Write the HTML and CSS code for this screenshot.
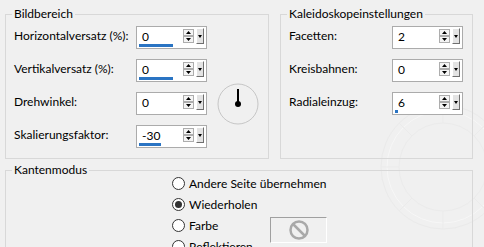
FILE: index.html
```html
<!DOCTYPE html>
<html lang="de">
<head>
  <meta charset="UTF-8" />
  <title>Kaleidoskop</title>
  <link rel="stylesheet" href="styles.css">
</head>
<body>
  <div class="dialog">
    <svg class="watermark" width="150" height="150" viewBox="0 0 150 150">
      <circle cx="75" cy="75" r="62" fill="none" stroke="#eaeaea" />
      <circle cx="75" cy="75" r="56" fill="none" stroke="#f7f7f7" />
      <circle cx="75" cy="75" r="44" fill="none" stroke="#ebebeb" />
      <path d="M75 13 L75 31 M75 119 L75 137 M13 75 L31 75 M119 75 L137 75 M31 31 L44 44 M106 44 L119 31 M31 119 L44 106 M106 106 L119 119" stroke="#ebebeb" fill="none" />
    </svg>

    <div class="top-row">
      <fieldset class="group image-area">
        <legend>Bildbereich</legend>
        <div class="form-grid">
          <label>Horizontalversatz (%):</label>
          <div class="spin">
            <div class="spin-field"><span class="spin-value">0</span><span class="spin-bar" style="width:34px"></span></div>
            <svg class="spin-arrows" width="11" height="14" viewBox="0 0 11 14"><rect x="0.5" y="0.5" width="10" height="6" fill="#f4f4f4" stroke="#adadad"/><rect x="0.5" y="7.5" width="10" height="6" fill="#f4f4f4" stroke="#adadad"/><path d="M3 5 L8 5 L5.5 2 Z M3 9 L8 9 L5.5 12 Z" fill="#000"/></svg>
            <span class="spin-drop"></span>
          </div>

          <label>Vertikalversatz (%):</label>
          <div class="spin">
            <div class="spin-field"><span class="spin-value">0</span><span class="spin-bar" style="width:34px"></span></div>
            <svg class="spin-arrows" width="11" height="14" viewBox="0 0 11 14"><rect x="0.5" y="0.5" width="10" height="6" fill="#f4f4f4" stroke="#adadad"/><rect x="0.5" y="7.5" width="10" height="6" fill="#f4f4f4" stroke="#adadad"/><path d="M3 5 L8 5 L5.5 2 Z M3 9 L8 9 L5.5 12 Z" fill="#000"/></svg>
            <span class="spin-drop"></span>
          </div>

          <label>Drehwinkel:</label>
          <div class="spin">
            <div class="spin-field"><span class="spin-value">0</span></div>
            <svg class="spin-arrows" width="11" height="14" viewBox="0 0 11 14"><rect x="0.5" y="0.5" width="10" height="6" fill="#f4f4f4" stroke="#adadad"/><rect x="0.5" y="7.5" width="10" height="6" fill="#f4f4f4" stroke="#adadad"/><path d="M3 5 L8 5 L5.5 2 Z M3 9 L8 9 L5.5 12 Z" fill="#000"/></svg>
            <span class="spin-drop"></span>
          </div>

          <label>Skalierungsfaktor:</label>
          <div class="spin">
            <div class="spin-field"><span class="spin-value">-30</span><span class="spin-bar" style="width:22px"></span></div>
            <svg class="spin-arrows" width="11" height="14" viewBox="0 0 11 14"><rect x="0.5" y="0.5" width="10" height="6" fill="#f4f4f4" stroke="#adadad"/><rect x="0.5" y="7.5" width="10" height="6" fill="#f4f4f4" stroke="#adadad"/><path d="M3 5 L8 5 L5.5 2 Z M3 9 L8 9 L5.5 12 Z" fill="#000"/></svg>
            <span class="spin-drop"></span>
          </div>

          <div class="dial">
            <svg width="42" height="42" viewBox="0 0 42 42">
              <circle cx="21" cy="21" r="20" fill="none" stroke="#c6c6c6" />
              <path d="M21 6 L21 21" stroke="#000" stroke-width="2" />
              <circle cx="21" cy="21" r="3" fill="#000" />
            </svg>
          </div>
        </div>
      </fieldset>

      <fieldset class="group kaleido">
        <legend>Kaleidoskopeinstellungen</legend>
        <div class="form-grid">
          <label>Facetten:</label>
          <div class="spin">
            <div class="spin-field"><span class="spin-value">2</span></div>
            <svg class="spin-arrows" width="11" height="14" viewBox="0 0 11 14"><rect x="0.5" y="0.5" width="10" height="6" fill="#f4f4f4" stroke="#adadad"/><rect x="0.5" y="7.5" width="10" height="6" fill="#f4f4f4" stroke="#adadad"/><path d="M3 5 L8 5 L5.5 2 Z M3 9 L8 9 L5.5 12 Z" fill="#000"/></svg>
            <span class="spin-drop"></span>
          </div>

          <label>Kreisbahnen:</label>
          <div class="spin">
            <div class="spin-field"><span class="spin-value">0</span></div>
            <svg class="spin-arrows" width="11" height="14" viewBox="0 0 11 14"><rect x="0.5" y="0.5" width="10" height="6" fill="#f4f4f4" stroke="#adadad"/><rect x="0.5" y="7.5" width="10" height="6" fill="#f4f4f4" stroke="#adadad"/><path d="M3 5 L8 5 L5.5 2 Z M3 9 L8 9 L5.5 12 Z" fill="#000"/></svg>
            <span class="spin-drop"></span>
          </div>

          <label>Radialeinzug:</label>
          <div class="spin">
            <div class="spin-field"><span class="spin-value">6</span><span class="spin-bar" style="width:3px"></span></div>
            <svg class="spin-arrows" width="11" height="14" viewBox="0 0 11 14"><rect x="0.5" y="0.5" width="10" height="6" fill="#f4f4f4" stroke="#adadad"/><rect x="0.5" y="7.5" width="10" height="6" fill="#f4f4f4" stroke="#adadad"/><path d="M3 5 L8 5 L5.5 2 Z M3 9 L8 9 L5.5 12 Z" fill="#000"/></svg>
            <span class="spin-drop"></span>
          </div>
        </div>
      </fieldset>
    </div>

    <fieldset class="group edge">
      <legend>Kantenmodus</legend>
      <div class="radio-list">
        <div class="radio wide"><span class="radio-dot"></span>Andere Seite übernehmen</div>
        <div class="radio wide"><span class="radio-dot checked"></span>Wiederholen</div>
        <div class="radio"><span class="radio-dot"></span>Farbe</div>
        <div class="swatch">
          <svg width="22" height="22" viewBox="0 0 22 22">
            <circle cx="11" cy="11" r="8.5" fill="none" stroke="#a9a9a9" stroke-width="2.5" />
            <path d="M5 5 L17 17" stroke="#a9a9a9" stroke-width="2.5" />
          </svg>
        </div>
        <div class="radio"><span class="radio-dot"></span>Reflektieren</div>
      </div>
    </fieldset>
  </div>
</body>
</html>
```

FILE: styles.css
```css
* {
  margin: 0;
  padding: 0;
  box-sizing: border-box;
}

body {
  font-family: Lato, 'Noto Sans', sans-serif;
  font-size: 12px;
  color: #000;
  background: #f0f0f0;
  overflow: hidden;
}

.dialog {
  position: relative;
  width: 484px;
  height: 247px;
  padding: 6px 0 0 5px;
  overflow: hidden;
}

.watermark {
  position: absolute;
  left: 368px;
  top: 92px;
}

.top-row {
  position: relative;
  display: grid;
  grid-template-columns: 264px 193px;
  column-gap: 11px;
}

.group {
  border: 1px solid #d8d8d8;
  padding: 0 0 10px 8px;
  min-width: 0;
}

.group legend {
  line-height: 16px;
  padding: 0 2px;
  margin-left: -2px;
}

.form-grid {
  display: grid;
  grid-template-rows: repeat(4, 23px);
  row-gap: 10px;
  padding-top: 4px;
  align-items: center;
}

.image-area .form-grid {
  grid-template-columns: 122px 71px 1fr;
}

.kaleido {
  padding-right: 10px;
}

.kaleido .form-grid {
  grid-template-columns: 103px 71px;
}

.form-grid label {
  grid-column: 1;
  line-height: 16px;
  padding-bottom: 4px;
  white-space: nowrap;
}

.spin {
  grid-column: 2;
  display: flex;
  align-items: flex-start;
  height: 23px;
  border: 1px solid #ababab;
  background: #fff;
  padding: 0 2px 0 2px;
}

.spin-field {
  flex: 1;
  display: flex;
  flex-direction: column;
  padding-top: 2px;
}

.spin-value {
  line-height: 15px;
  padding-left: 3px;
}

.spin-bar {
  height: 3px;
  background: #2a74c3;
}

.spin-arrows {
  margin-top: 2px;
  margin-right: 2px;
  flex-shrink: 0;
}

.spin-drop {
  position: relative;
  flex-shrink: 0;
  width: 8px;
  height: 16px;
  margin-top: 1px;
  background: #e3e3e3;
  border-top: 1px solid #fff;
  border-left: 1px solid #fff;
  border-right: 1px solid #6f6f6f;
  border-bottom: 1px solid #6f6f6f;
}

.spin-drop::after {
  content: '';
  position: absolute;
  left: 1px;
  top: 6px;
  border-left: 2.5px solid transparent;
  border-right: 2.5px solid transparent;
  border-top: 3px solid #000;
}

.dial {
  grid-column: 3;
  grid-row: 2 / 5;
  justify-self: center;
  align-self: center;
  height: 42px;
}

.edge {
  position: relative;
  width: 468px;
  margin-top: 3px;
}

.radio-list {
  display: grid;
  grid-template-columns: 98px 57px;
  grid-auto-rows: 21px;
  padding-left: 158px;
  margin-top: -5px;
}

.radio {
  display: flex;
  align-items: center;
  gap: 4px;
  white-space: nowrap;
}

.radio.wide {
  grid-column: 1 / 3;
}

.radio-dot {
  position: relative;
  flex-shrink: 0;
  width: 13px;
  height: 13px;
  border: 1px solid #333;
  border-radius: 50%;
  background: #fff;
}

.radio-dot.checked::after {
  content: '';
  position: absolute;
  left: 2px;
  top: 2px;
  width: 7px;
  height: 7px;
  border-radius: 50%;
  background: #333;
}

.swatch {
  grid-column: 2;
  grid-row: 3;
  align-self: start;
  margin-top: 2px;
  height: 26px;
  display: flex;
  align-items: center;
  justify-content: center;
  background: #f0f0f0;
  border-top: 1px solid #a0a0a0;
  border-left: 1px solid #a0a0a0;
  border-right: 1px solid #fff;
  border-bottom: 1px solid #fff;
}
```
